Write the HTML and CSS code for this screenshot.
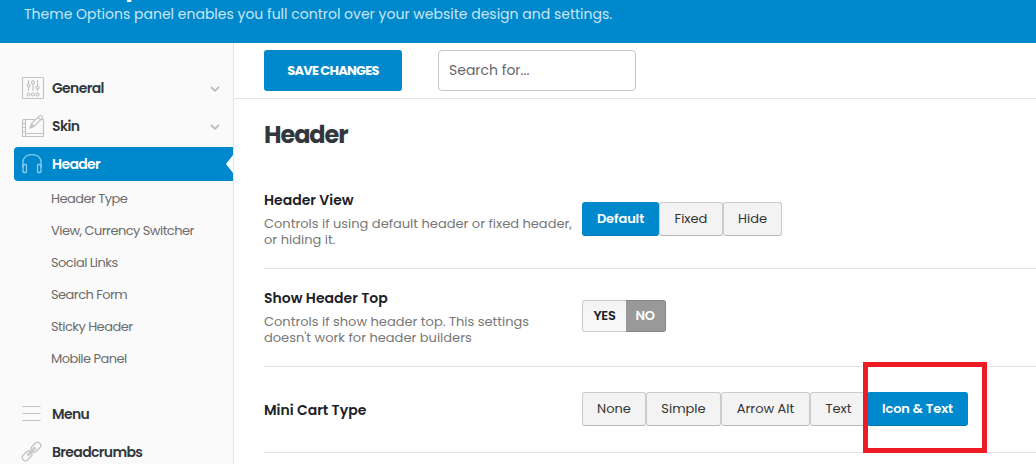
FILE: index.html
```html
<!DOCTYPE html>
<html lang="en">

<head>
    <meta charset="UTF-8">
    <meta name="viewport" content="width=device-width, initial-scale=1.0">
    <title>Theme Options</title>
    <link rel="stylesheet" href="styles.css">
</head>

<body>
    <header class="banner">
        <h1>Theme Options</h1>
        <p>Theme Options panel enables you full control over your website design and settings.</p>
    </header>

    <div class="panel">
        <aside class="sidebar">
            <ul class="menu">
                <li class="item">
                    <svg class="icon" width="22" height="22" viewBox="0 0 22 22">
                        <rect x=".5" y=".5" width="21" height="21" rx="1" />
                        <path d="M6.500 3v4M6.500 10v4M11 3v1M11 7v7M15.500 3v6M15.500 12v2" />
                        <circle cx="6.500" cy="8.500" r="1.500" />
                        <circle cx="11" cy="5.500" r="1.500" />
                        <circle cx="15.500" cy="10.500" r="1.500" />
                        <circle cx="6.500" cy="17.500" r="1.500" />
                        <circle cx="11" cy="17.500" r="1.500" />
                        <circle cx="15.500" cy="17.500" r="1.500" />
                    </svg>
                    <span class="name">General</span>
                    <svg class="arrow" width="10" height="6" viewBox="0 0 10 6"><path d="M1 1l4 3.800L9 1" /></svg>
                </li>
                <li class="item">
                    <svg class="icon" width="22" height="22" viewBox="0 0 22 22">
                        <path d="M13 4.500H1.500l-1 1v16h21V8M18.500 4.500h3V9M3.500 4.500v17M.5 8.500h3M.5 12.500h3M.5 16.500h3M3.500 18.500h18" />
                        <path d="M8 13l1.500-4.500L17.500.8q1.500-.7 2.500.4t.2 2.300l-8.200 8zM9.500 8.500l2.500 3M16 2.300l2.700 2.700M8 13l3-3" />
                    </svg>
                    <span class="name">Skin</span>
                    <svg class="arrow" width="10" height="6" viewBox="0 0 10 6"><path d="M1 1l4 3.800L9 1" /></svg>
                </li>
                <li class="item active">
                    <svg class="icon" width="22" height="22" viewBox="0 0 22 22">
                        <path d="M.8 15v-4.500C.8 4.500 4.800 1.700 10 1.700s9.200 2.800 9.200 8.800V15" />
                        <rect x="1" y="11.500" width="3.500" height="8" rx="1" />
                        <rect x="15.500" y="11.500" width="3.500" height="8" rx="1" />
                    </svg>
                    <span class="name">Header</span>
                </li>
            </ul>
            <ul class="submenu">
                <li>Header Type</li>
                <li>View, Currency Switcher</li>
                <li>Social Links</li>
                <li>Search Form</li>
                <li>Sticky Header</li>
                <li>Mobile Panel</li>
            </ul>
            <ul class="menu">
                <li class="item">
                    <svg class="icon" width="22" height="22" viewBox="0 0 22 22">
                        <path d="M.5 3.500h18M.5 10.500h18M.5 17.500h18" />
                    </svg>
                    <span class="name">Menu</span>
                </li>
                <li class="item">
                    <svg class="icon" width="22" height="22" viewBox="0 0 22 22">
                        <g transform="rotate(-45 9.500 10.500)">
                            <rect x="-2.200" y="7.300" width="11" height="6.400" rx="3.200" />
                            <rect x="10.200" y="7.300" width="11" height="6.400" rx="3.200" />
                            <path d="M4.500 9.700h10v1.600h-10z" />
                        </g>
                    </svg>
                    <span class="name">Breadcrumbs</span>
                </li>
            </ul>
        </aside>

        <main class="main">
            <div class="toolbar">
                <button class="save">SAVE CHANGES</button>
                <input class="search" type="text" placeholder="Search for...">
            </div>
            <section class="options">
                <h2>Header</h2>
                <div class="field">
                    <div class="label">
                        <h3>Header View</h3>
                        <p>Controls if using default header or fixed header,<br>or hiding it.</p>
                    </div>
                    <div class="buttons">
                        <span class="btn selected w77">Default</span>
                        <span class="btn w64">Fixed</span>
                        <span class="btn w59">Hide</span>
                    </div>
                </div>
                <div class="field">
                    <div class="label">
                        <h3>Show Header Top</h3>
                        <p>Controls if show header top. This settings<br>doesn't work for header builders</p>
                    </div>
                    <div class="switch">
                        <span class="yes">YES</span>
                        <span class="no">NO</span>
                    </div>
                </div>
                <div class="field">
                    <div class="label">
                        <h3>Mini Cart Type</h3>
                    </div>
                    <div class="buttons">
                        <span class="btn w64">None</span>
                        <span class="btn w75">Simple</span>
                        <span class="btn w89">Arrow Alt</span>
                        <span class="btn w57">Text</span>
                        <span class="btn selected w101">Icon &amp; Text</span>
                    </div>
                </div>
            </section>
        </main>
    </div>
    <!-- highlighted option -->
    <div class="marker"></div>
</body>

</html>
```

FILE: styles.css
```css
* {
    box-sizing: border-box;
}

body {
    position: relative;
    width: 1036px;
    height: 464px;
    margin: 0;
    overflow: hidden;
    background: #fff;
    font-family: Poppins, Inter, sans-serif;
    color: #1d2127;
}

h1,
h2,
h3,
p,
ul {
    margin: 0;
    padding: 0;
}

ul {
    list-style: none;
}

/* banner */
.banner {
    display: flex;
    flex-direction: column;
    justify-content: flex-end;
    height: 43px;
    padding: 0 24px 18px;
    overflow: hidden;
    background: #0088cc;
    color: #fff;
    white-space: nowrap;
}

.banner h1 {
    flex: none;
    margin-bottom: 1px;
    font-size: 24px;
    line-height: 30px;
    font-weight: 700;
    letter-spacing: -1.1px;
}

.banner p {
    flex: none;
    font-size: 14px;
    line-height: 22px;
    color: #c8e6f5;
}

.panel {
    display: flex;
    height: 421px;
}

/* sidebar */
.sidebar {
    flex: none;
    width: 234px;
    padding: 26px 0 0 14px;
    background: #fafafa;
    border-right: 1px solid #e4e4e4;
    white-space: nowrap;
}

.item {
    display: flex;
    align-items: center;
    height: 38px;
    padding: 0 13px 0 8px;
}

.icon {
    flex: none;
    margin-right: 8px;
    fill: none;
    stroke: #c2c2c2;
    stroke-width: 1.15;
    overflow: visible;
}

.name {
    flex: 1;
    font-size: 14px;
    font-weight: 600;
    letter-spacing: -0.65px;
    color: #32373c;
}

.arrow {
    fill: none;
    stroke: #b9bbbd;
    stroke-width: 1.8;
    margin-top: 2px;
}

.active {
    position: relative;
    height: 34px;
    margin-top: 2px;
    background: #0088cc;
    border-radius: 4px 0 0 4px;
}

.active::after {
    content: "";
    position: absolute;
    top: 8px;
    right: 0;
    border: 9px solid transparent;
    border-right: 7px solid #fff;
    border-left: 0;
}

.active .icon {
    stroke: #8accee;
    stroke-width: 1.3;
}

.active .name {
    color: #fff;
}

.submenu {
    padding: 2px 0 20px 37px;
    font-size: 13px;
    line-height: 32px;
    letter-spacing: -0.54px;
    color: #6c6c6c;
}

/* main */
.main {
    flex: 1;
}

.toolbar {
    display: flex;
    gap: 36px;
    height: 56px;
    padding: 7px 30px;
    border-bottom: 1px solid #e4e4e4;
}

.save {
    width: 138px;
    height: 41px;
    padding: 0;
    border: 0;
    border-radius: 3px;
    background: #0088cc;
    color: #fff;
    font: 700 13px Poppins, Inter, sans-serif;
    letter-spacing: -0.75px;
}

.search {
    width: 198px;
    height: 41px;
    padding: 0 10px;
    border: 1px solid #c8c8c8;
    border-radius: 4px;
    font: 14px Poppins, Inter, sans-serif;
}

.search::placeholder {
    color: #666;
}

.options {
    padding-left: 30px;
}

.options h2 {
    height: 72px;
    padding-top: 18px;
    font-size: 24px;
    line-height: 36px;
    font-weight: 700;
    letter-spacing: -1.1px;
    color: #32373c;
}

.field {
    display: flex;
    align-items: center;
    height: 98px;
    padding-bottom: 1px;
    border-bottom: 1px solid #e4e4e4;
}

.field:last-child {
    height: 86px;
}

.label {
    flex: none;
    width: 318px;
    white-space: nowrap;
}

.label h3 {
    font-size: 14px;
    line-height: 20px;
    font-weight: 600;
}

.label p {
    margin-top: 6px;
    font-size: 13px;
    line-height: 16px;
    color: #777;
}

.field:last-child .label {
    padding-top: 2px;
}

.buttons {
    display: flex;
}

.btn {
    height: 34px;
    border: 1px solid #ccc;
    border-bottom-color: #b8b8b8;
    border-radius: 3px;
    background: #f3f3f3;
    font-size: 13px;
    line-height: 31px;
    text-align: center;
    white-space: nowrap;
    color: #333;
}

.selected {
    border-color: #0088cc;
    border-bottom-color: #0079b8;
    background: #0088cc;
    color: #fff;
    font-weight: 600;
    letter-spacing: -0.1px;
}

.w57 {
    width: 57px;
}

.w59 {
    width: 59px;
}

.w64 {
    width: 64px;
}

.w75 {
    width: 75px;
}

.w77 {
    width: 77px;
}

.w89 {
    width: 89px;
}

.w101 {
    width: 101px;
}

.switch {
    display: flex;
    height: 32px;
    margin-bottom: 2px;
    font-size: 13px;
    font-weight: 600;
    line-height: 30px;
    letter-spacing: -0.3px;
    text-align: center;
}

.yes {
    width: 44px;
    border: 1px solid #ccc;
    border-right: 0;
    border-radius: 3px 0 0 3px;
    background: linear-gradient(#f3f3f3, #f9f9f9);
}

.no {
    width: 40px;
    padding-right: 1px;
    border: 1px solid #888;
    border-left: 0;
    border-radius: 0 3px 3px 0;
    background: #999;
    color: #fff;
}

.marker {
    position: absolute;
    left: 863px;
    top: 362px;
    width: 124px;
    height: 91px;
    border: 5px solid #ed1c24;
}
```
